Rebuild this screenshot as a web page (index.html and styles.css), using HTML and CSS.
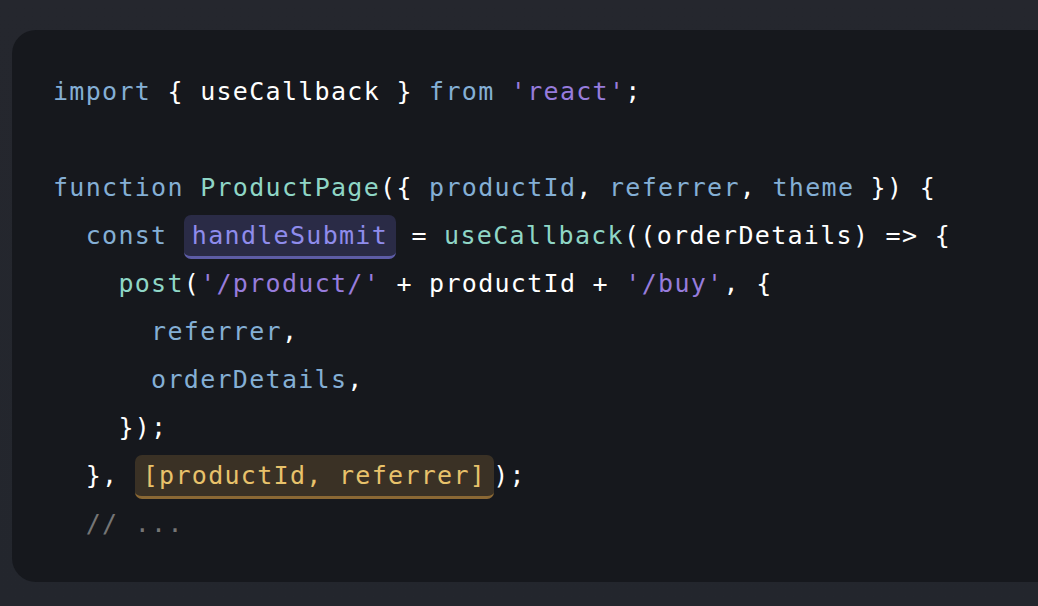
FILE: index.html
```html
<!DOCTYPE html>
<html lang="en">
<head>
<meta charset="utf-8">
<title>Code</title>
<link rel="stylesheet" href="styles.css">
</head>
<body>
<div class="page">
<div class="code">
<div class="line"><span class="kw">import</span> { useCallback } <span class="kw">from</span> <span class="str">'react'</span>;</div>
<div class="line"> </div>
<div class="line"><span class="kw">function</span> <span class="def">ProductPage</span>({ <span class="kw">productId</span>, <span class="kw">referrer</span>, <span class="kw">theme</span> }) {</div>
<div class="line">  <span class="kw">const</span> <span class="hl hl-purple">handleSubmit</span> = <span class="def">useCallback</span>((orderDetails) =&gt; {</div>
<div class="line">    <span class="def">post</span>(<span class="str">'/product/'</span> + productId + <span class="str">'/buy'</span>, {</div>
<div class="line">      <span class="kw">referrer</span>,</div>
<div class="line">      <span class="kw">orderDetails</span>,</div>
<div class="line">    });</div>
<div class="line">  }, <span class="hl hl-yellow">[productId, referrer]</span>);</div>
<div class="line">  <span class="cm">// ...</span></div>
</div>
</div>
</body>
</html>
```

FILE: styles.css
```css
html, body {
  margin: 0;
  padding: 0;
  background: #23272f;
  overflow: hidden;
}

.page {
  width: 1038px;
  height: 606px;
  padding: 30px 0 0 12px;
  box-sizing: border-box;
  overflow: hidden;
  background: linear-gradient(180deg, #25272e 0%, #23262d 100%);
}

.code {
  width: 1060px;
  box-sizing: border-box;
  padding: 38px 0 34px 41px;
  background: #16181d;
  border-radius: 24px;
  color: #ffffff;
  font-family: "DejaVu Sans Mono", monospace;
  font-size: 25px;
  letter-spacing: 1.3px;
  line-height: 48px;
}

.line {
  height: 48px;
  white-space: pre;
}

.kw { color: #84afd5; }
.def { color: #8fd6c6; }
.str { color: #977cdc; }
.cm { color: #757575; }

.hl {
  display: inline-block;
  line-height: 41px;
  padding: 0 8px 0 8px;
  margin-right: -1px;
  border-bottom: 3px solid;
  border-radius: 7px;
}

.hl-purple {
  background: #2a2b46;
  color: #8f8cec;
  border-color: #5d5ca6;
}

.hl-yellow {
  background: #3a3125;
  color: #e8c26b;
  border-color: #8b6834;
}
```
